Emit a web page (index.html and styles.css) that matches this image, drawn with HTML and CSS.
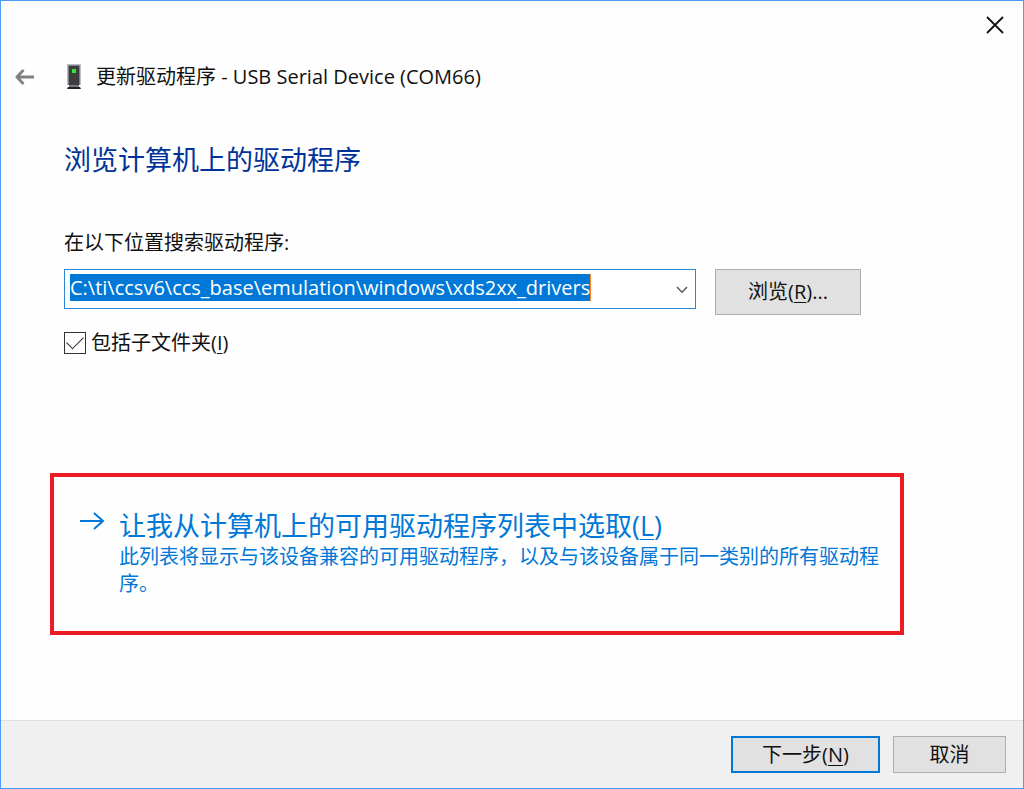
FILE: index.html
```html
<!DOCTYPE html>
<html lang="zh-CN">
<head>
<meta charset="utf-8">
<title>更新驱动程序</title>
<link rel="stylesheet" href="styles.css">
</head>
<body>
<main class="window">
  <div class="titlebar">
    <button class="icon-button close" type="button" aria-label="关闭">
      <svg width="18" height="18" viewBox="0 0 18 18"><path d="M1 1L17 17M17 1L1 17" fill="none" stroke="#111" stroke-width="1.8"/></svg>
    </button>
  </div>
  <header class="header">
    <button class="icon-button back" type="button" aria-label="返回">
      <svg width="20" height="16" viewBox="0 0 20 16"><path d="M19 8H2M8.500 1L2 8L8.500 15" fill="none" stroke="#808080" stroke-width="2.8"/></svg>
    </button>
    <svg class="device" width="16" height="26" viewBox="0 0 16 26">
      <path d="M1 0H15V21H1Z" fill="#b9bfc6"/>
      <path d="M2.500 1.500H13.500V21H2.500Z" fill="#3d3d40"/>
      <path d="M6 5H10V9H6Z" fill="#2fe82f"/>
      <path d="M3 21H13V23H3Z" fill="#77797c"/>
      <path d="M2 23H14L15 25H1Z" fill="#222"/>
    </svg>
    <span class="caption">更新驱动程序 - USB Serial Device (COM66)</span>
  </header>
  <section class="content">
    <h1 class="heading">浏览计算机上的驱动程序</h1>
    <label class="label" for="path">在以下位置搜索驱动程序:</label>
    <div class="search">
      <div class="combo">
        <input class="path" id="path" type="text" spellcheck="false" value="C:\ti\ccsv6\ccs_base\emulation\windows\xds2xx_drivers">
        <button class="icon-button drop" type="button" aria-label="展开">
          <svg width="12" height="8" viewBox="0 0 12 8"><path d="M1 1L6 6.200L11 1" fill="none" stroke="#555" stroke-width="1.400"/></svg>
        </button>
      </div>
      <button class="button browse" type="button">浏览(<u>R</u>)...</button>
    </div>
    <div class="option">
      <input class="check" id="subfolders" type="checkbox" checked>
      <label for="subfolders">包括子文件夹(<u>I</u>)</label>
    </div>
  </section>
  <a class="command" href="#">
    <svg class="arrow" width="26" height="20" viewBox="0 0 26 20"><path d="M1 10H24M15 2L24 10L15 18" fill="none" stroke="#0078d7" stroke-width="2"/></svg>
    <span class="command-text">
      <span class="command-title">让我从计算机上的可用驱动程序列表中选取(<u>L</u>)</span>
      <span class="command-note">此列表将显示与该设备兼容的可用驱动程序，以及与该设备属于同一类别的所有驱动程序。</span>
    </span>
  </a>
  <footer class="footer">
    <button class="button next" type="button">下一步(<u>N</u>)</button>
    <button class="button cancel" type="button">取消</button>
  </footer>
</main>
</body>
</html>
```
FILE: styles.css
```css
* {
  box-sizing: border-box;
}

body {
  margin: 0;
  background: #fff;
  color: #111;
  font: 20px/28px "Open Sans", "Noto Sans CJK SC", sans-serif;
}

button,
input {
  font: inherit;
  color: inherit;
}

u {
  text-decoration-thickness: 1px;
  text-underline-offset: 3px;
}

.window {
  display: flex;
  flex-direction: column;
  min-height: 100vh;
  border: 1px solid #4a9cf5;
  background: #fefefe;
}

.titlebar {
  display: flex;
  justify-content: flex-end;
  padding: 8px 11px;
}

.icon-button {
  display: flex;
  align-items: center;
  justify-content: center;
  padding: 0;
  border: 0;
  background: none;
}

.close {
  width: 34px;
  height: 32px;
}

.header {
  display: flex;
  align-items: center;
  padding: 14px 14px 0;
}

.back {
  width: 20px;
  height: 28px;
}

.device {
  margin: 0 14px 0 31px;
}

.content {
  display: flex;
  flex-direction: column;
  padding: 52px 63px 0;
}

.heading {
  margin: 0;
  color: #003399;
  font-size: 27px;
  line-height: 34px;
  font-weight: 400;
}

.label {
  margin-top: 52px;
}

.search {
  display: flex;
  align-items: flex-start;
  gap: 19px;
  margin-top: 12px;
}

.combo {
  display: flex;
  align-items: flex-start;
  justify-content: space-between;
  flex: 0 1 632px;
  height: 40px;
  padding: 4px 5px;
  border: 1px solid #2b88d9;
  background: #fff;
}

.path {
  field-sizing: content;
  min-width: 0;
  height: 27px;
  padding: 0;
  border: 0;
  border-right: 1px solid #ff8728;
  outline: 0;
  background: #0078d7;
  color: #fff;
}

.drop {
  width: 16px;
  height: 32px;
}

.button {
  padding: 0;
  border: 1px solid #adadad;
  background: #e1e1e1;
}

.browse {
  width: 146px;
  height: 46px;
}

.option {
  display: flex;
  align-items: center;
  gap: 5px;
  margin-top: 14px;
}

.check {
  display: grid;
  place-items: center;
  appearance: none;
  width: 22px;
  height: 22px;
  margin: 0;
  border: 1px solid #333;
  background: #fff;
}

.check:checked::before {
  content: "";
  width: 15px;
  height: 8px;
  margin-bottom: 5px;
  border: solid #222;
  border-width: 0 0 1px 1px;
  transform: rotate(-45deg);
}

.command {
  display: flex;
  align-items: flex-start;
  gap: 14px;
  max-width: 854px;
  min-height: 162px;
  margin: 116px 49px 0;
  padding: 32px 16px 32px 25px;
  border: 4px solid #ed1c24;
  color: #0078d7;
  text-decoration: none;
}

.arrow {
  flex: none;
  margin-top: 2px;
}

.command-text {
  display: flex;
  flex-direction: column;
}

.command-title {
  font-size: 27px;
  line-height: 34px;
}

.command-note {
  line-height: 27px;
}

.footer {
  display: flex;
  justify-content: flex-end;
  gap: 13px;
  margin-top: auto;
  padding: 15px 17px;
  border-top: 1px solid #dfdfdf;
  background: #f0f0f0;
}

.next {
  width: 149px;
  height: 37px;
  border: 2px solid #0078d7;
}

.cancel {
  width: 113px;
  height: 37px;
}
```
